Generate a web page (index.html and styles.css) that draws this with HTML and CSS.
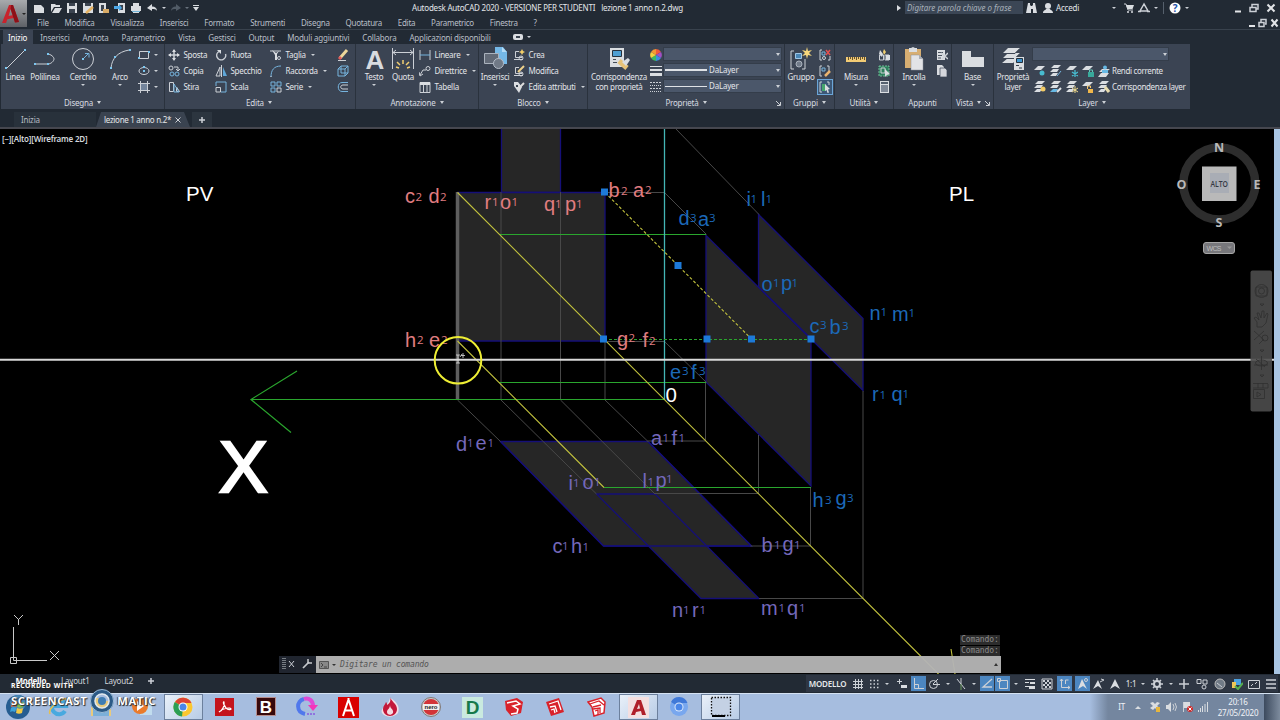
FILE: index.html
```html
<!DOCTYPE html>
<html lang="it">
<head>
    <meta charset="UTF-8">
    <title>Autodesk AutoCAD 2020 - lezione 1 anno n.2.dwg</title>
    <link rel="stylesheet" href="styles.css">
</head>
<body>
    <header>
        <div class="logo">
            <svg width="18" height="20" viewBox="0 0 18 20"><path fill="#c8232c" d="M0 19L7 1h4l6 17-4 .5-1.4-4.5-6.2 1.2L4 19zM6.6 12l4-.8L8.6 5z"/><path fill="#8d1118" d="M9 1h2l6 17-4 .5L8.6 5z"/></svg>
            <i class="caret"></i>
        </div>
        <div class="head-rows">
            <div class="titlebar">
                <div class="quick">
                    <svg width="12" height="12"><path class="w" d="M1 3h7l3 3v5H1z"/></svg>
                    <svg width="12" height="12"><path class="w" d="M1 10V2h4l1 1h4v2H4zM2 11l3-5h7l-3 5z"/></svg>
                    <svg width="12" height="12"><path class="w" d="M1 1h10v10H1z"/><path class="k" d="M3 1h6v3H3zM3 7h6v4H3z"/></svg>
                    <svg width="12" height="12"><path class="w" d="M1 1h10v10H1z"/><path class="k" d="M3 1h6v3H3z"/><path d="M4 11L11 5" stroke="#e5b262" stroke-width="2.5"/></svg>
                    <svg width="12" height="12"><path class="w" d="M1 1h7v10H1z"/><path class="k" d="M3 3h3v6H3z"/><path fill="#d9ab66" d="M5 7h6v4H5z"/></svg>
                    <svg width="12" height="12"><path class="w" d="M4 1h7v10H4z"/><path class="k" d="M6 3h3v5H6z"/><path fill="#4da8e8" d="M0 4h5V2l3 4-3 3V7H0z"/></svg>
                    <svg width="12" height="12"><path class="w" d="M3 1h6v3H3zM1 4h10v5H1zM3 8h6v3H3z"/><path stroke="#72b4d8" d="M2 9.5h8"/></svg>
                    <svg width="12" height="12"><path class="w" d="M1 6l5-4v2.500c3 0 5 1.500 5 4.500-1-2-3-2-5-2V9z"/></svg>
                    <i class="caret"></i>
                    <svg width="12" height="12"><path fill="#515b66" d="M11 6L6 2v2.500C3 4.500 1 6 1 9c1-2 3-2 5-2v2z"/></svg>
                    <i class="caret dim"></i>
                    <svg width="8" height="8"><path class="w" d="M1 1h6v1H1zM1 3h6L4 7z"/></svg>
                </div>
                <div class="doc-title"><span>Autodesk AutoCAD 2020 - VERSIONE PER STUDENTI</span><span>lezione 1 anno n.2.dwg</span></div>
                <svg class="play" width="4" height="6"><path class="w" d="M0 0l4 3-4 3z"/></svg>
                <div class="search">Digitare parola chiave o frase</div>
                <div class="account">
                    <svg width="12" height="12"><path class="w" d="M2 1h2v2l1 1h1l1-1V1h2l2 10H7V7H5v4H0z"/></svg>
                    <svg width="12" height="12"><circle class="w" cx="6" cy="4" r="3"/><path class="w" d="M1 11c0-3 3-3 3-4h4c0 1 3 1 3 4z"/></svg>
                    <span>Accedi</span>
                    <i class="caret"></i>
                    <svg width="12" height="12"><path class="l" d="M1 2h2l2 6h5"/><path class="w" d="M3 3h8L9.500 7H4.500z"/><circle class="w" cx="5" cy="10" r="1"/><circle class="w" cx="9" cy="10" r="1"/></svg>
                    <svg width="12" height="12"><path class="l" stroke-width="1.500" d="M6 2L2 9h8zM0 9.500h3M9 9.500h3"/></svg>
                    <i class="caret"></i>
                    <i class="sep"></i>
                    <svg width="12" height="12"><circle cx="6" cy="6" r="5.500" fill="#fff"/><text class="help" x="6" y="9.500">?</text></svg>
                    <i class="caret"></i>
                </div>
                <div class="win">
                    <svg width="7" height="10"><path class="l2" d="M0 8.500h6"/></svg>
                    <svg width="10" height="10"><path class="l" stroke-width="1.500" d="M3 4V1.500h6V6H7M1 4.500h6v4H1z"/></svg>
                    <svg width="10" height="10"><path class="l2" d="M1.500 1.500l7 7M8.500 1.500l-7 7"/></svg>
                </div>
            </div>
            <nav class="menubar">
                <span>File</span><span>Modifica</span><span>Visualizza</span><span>Inserisci</span><span>Formato</span><span>Strumenti</span><span>Disegna</span><span>Quotatura</span><span>Edita</span><span>Parametrico</span><span>Finestra</span><span>?</span>
                <div class="win small">
                    <svg width="6" height="10"><path class="l2" d="M0 8h6"/></svg>
                    <svg width="9" height="10"><path class="l" stroke-width="1.500" d="M3 4V1.500h5V6H7M1 4.500h5v4H1z"/></svg>
                    <svg width="9" height="10"><path class="l2" d="M1.500 1.500l6 7M7.500 1.500l-6 7"/></svg>
                </div>
            </nav>
        </div>
    </header>

    <nav class="tabs">
        <span class="active">Inizio</span><span>Inserisci</span><span>Annota</span><span>Parametrico</span><span>Vista</span><span>Gestisci</span><span>Output</span><span>Moduli aggiuntivi</span><span>Collabora</span><span>Applicazioni disponibili</span>
        <svg width="10" height="7"><rect class="w" width="10" height="6" rx="2"/><path class="k" d="M3 2h4v2H3z"/></svg>
        <i class="caret"></i>
    </nav>

    <section class="ribbon">
        <div class="panel draw">
            <div class="tools">
                <div class="big"><svg width="24" height="24"><path class="l" d="M4 21L22 3"/><path class="dot" d="M2 20h2v2H2zM21 2h2v2h-2z"/></svg><b>Linea</b></div>
                <div class="big"><svg width="24" height="24"><path class="l" d="M2 17h13c3 0 6-3 6-5s-3-5-7-5"/><path class="dot" d="M1 16h2v2H1zM14 16h2v2h-2zM14 6h2v2h-2z"/></svg><b>Polilinea</b></div>
                <div class="big"><svg width="24" height="24"><circle class="l" cx="12" cy="12" r="10.500"/><path class="b" d="M12 12l5-5M14 6.500h4v4"/><path class="dot" d="M11 11h2v2h-2z"/></svg><b>Cerchio</b><i class="caret"></i></div>
                <div class="big"><svg width="24" height="24"><path class="l" d="M3 21C4 11 10 5 21 3"/><path class="dot" d="M2 20h2v2H2zM6 9h2v2H6zM21 2h2v2h-2z"/></svg><b>Arco</b><i class="caret"></i></div>
                <div class="col">
                    <div class="tool"><svg width="12" height="12"><path class="l" d="M1.500 2.500h9v7h-9z"/><path class="dot" d="M0 8h2v2H0zM10 2h2v2h-2z"/></svg><i class="caret"></i></div>
                    <div class="tool"><svg width="12" height="12"><ellipse class="l" cx="6" cy="6" rx="5" ry="3.500"/><path class="dot" d="M5 5h2v2H5zM5 1h2v2H5z"/></svg><i class="caret"></i></div>
                    <div class="tool"><svg width="12" height="12"><path class="l" d="M2.500 0v12M9.500 0v12M0 2.500h12M0 9.500h12"/><path fill="#73849b" d="M3 3h6v6H3z"/></svg><i class="caret"></i></div>
                </div>
            </div>
            <h2>Disegna <i class="caret"></i></h2>
        </div>

        <div class="panel edit">
            <div class="tools">
                <div class="col">
                    <div class="tool"><svg width="12" height="12"><path class="l" stroke-width="1.500" d="M6 1v10M1 6h10"/><path class="w" d="M6 0l2 3H4zM6 12l2-3H4zM0 6l3-2v4zM12 6L9 4v4z"/></svg>Sposta</div>
                    <div class="tool"><svg width="12" height="12"><circle class="l" cx="3" cy="3" r="2"/><circle class="b" cx="4" cy="9" r="2"/><circle class="b" cx="9" cy="9" r="2"/><path class="l" d="M6 2h4v3M8 4l2 2 2-2"/></svg>Copia</div>
                    <div class="tool"><svg width="12" height="12"><path class="l" d="M1.500 1.500h4v9h-4zM8.500 6v4.500h3z"/><path class="b" d="M6 3l5 8H6z"/></svg>Stira</div>
                </div>
                <div class="col">
                    <div class="tool"><svg width="12" height="12"><path class="l" stroke-width="1.400" d="M4 2.500A4.500 4.500 0 1 0 10.500 5"/><path class="w" d="M2 1h4v4z"/></svg>Ruota</div>
                    <div class="tool"><svg width="12" height="12"><path class="l" d="M5 2v9H1zM6.500 0v12"/><path fill="#5fa7d8" d="M8 2l4 9H8z"/></svg>Specchio</div>
                    <div class="tool"><svg width="12" height="12"><path class="b" d="M1 5V1h10v10H6"/><path class="l" d="M1 6.500h4.500V11H1z"/></svg>Scala</div>
                </div>
                <div class="col">
                    <div class="tool"><svg width="12" height="12"><path class="l" d="M0 2h11"/><path class="w" d="M2 1l4 3 3-2-2 3v6H5V6z"/><circle class="l" cx="9" cy="9" r="1.500"/></svg>Taglia <i class="caret"></i></div>
                    <div class="tool"><svg width="12" height="12"><path class="b" d="M1 12C1 5 4 1 11 1"/><path class="l" d="M1 11v1"/></svg>Raccorda <i class="caret"></i></div>
                    <div class="tool"><svg width="12" height="12"><path class="b" d="M1 1h4v4H1zM7 1h4v4H7zM1 7h4v4H1z"/><path class="l" d="M7 7h4v4H7z"/></svg>Serie <i class="caret"></i></div>
                </div>
                <div class="col">
                    <div class="tool"><svg width="12" height="12"><path d="M3 9l7-8" stroke="#ecd79a" stroke-width="3"/><path d="M2 10l2-2" stroke="#e45b5b" stroke-width="3"/><path class="l" d="M1 11.500h8"/></svg></div>
                    <div class="tool"><svg width="12" height="12"><path class="b" d="M1 4h7v7H1zM1 4l3-3h7l-3 3M11 1v7l-3 3M4 1v7h7"/></svg></div>
                    <div class="tool"><svg width="12" height="12"><path class="b" d="M11 1.500H5c-5 0-5 9 0 9h6"/><path class="l" d="M11 4H6C3 4 3 8 6 8h5"/></svg></div>
                </div>
            </div>
            <h2>Edita <i class="caret"></i></h2>
        </div>

        <div class="panel note">
            <div class="tools">
                <div class="big"><svg width="24" height="24"><text class="big-a" x="13" y="21.500">A</text></svg><b>Testo</b><i class="caret"></i></div>
                <div class="big"><svg width="24" height="24"><path class="l" d="M1.500 1v21M22.500 1v21M2 5.500h20M5 3L2 5.500 5 8M19 3l3 2.500L19 8"/><path d="M8 21l-3-1M9 18l-3-3M12 17v-4M15 18l3-3M16 21l3-1" stroke="#f0cd72" stroke-width="1.500"/></svg><b>Quota</b></div>
                <div class="col">
                    <div class="tool"><svg width="12" height="12"><path class="l" d="M1 1v10M11 1v10"/><path class="b" d="M1 6h10"/></svg>Lineare <i class="caret"></i></div>
                    <div class="tool"><svg width="12" height="12"><circle class="l" cx="9" cy="3.500" r="2"/><path class="l" d="M1 10l3-5h3M0 7l1 4 3-2"/></svg>Direttrice <i class="caret"></i></div>
                    <div class="tool"><svg width="12" height="12"><path class="l" d="M1 1.500h10v10H1zM4.500 4v8M8 4v8"/><path class="w" d="M1 1h10v3H1z"/></svg>Tabella</div>
                </div>
            </div>
            <h2>Annotazione <i class="caret"></i></h2>
        </div>

        <div class="panel block">
            <div class="tools">
                <div class="big"><svg width="24" height="24"><path fill="#75b9e8" d="M12 0h8l4 5v12H12z"/><path fill="#b4dcf7" d="M19 0v5h5z"/><path fill="#626a77" stroke="#aab2bd" d="M1.500 6.500h14v10h-14z"/><circle cx="15.500" cy="16.500" r="5" fill="#707986" stroke="#b5bdc8"/></svg><b>Inserisci</b><i class="caret"></i></div>
                <div class="col">
                    <div class="tool"><svg width="12" height="12"><path class="l" d="M6 2.500H2.500v6H9V7M1 10.500h9"/><circle class="l" cx="8" cy="9" r="2"/><path fill="#f3cf69" d="M9 0l1 2 2 1-2 1-1 2-1-2-2-1 2-1z"/></svg>Crea</div>
                    <div class="tool"><svg width="12" height="12"><path class="l" d="M6 2.500H2.500v6H9V7M1 10.500h9"/><circle class="l" cx="8" cy="9" r="2"/><path d="M5 7l6-6" stroke="#efd28b" stroke-width="2"/></svg>Modifica</div>
                    <div class="tool"><svg width="12" height="12"><path class="w" d="M1 1h4l4 5-3 6-5-7z"/><path d="M5 8l6-6" stroke="#ddd" stroke-width="2"/><path class="k" d="M3 4h2v2H3z"/></svg>Edita attributi <i class="caret"></i></div>
                </div>
            </div>
            <h2>Blocco <i class="caret"></i></h2>
        </div>

        <div class="panel props">
            <div class="tools">
                <div class="big"><svg width="24" height="24"><path class="w" d="M3 1h14v19H3z"/><path fill="#4e9fd3" stroke="#26313d" d="M5.500 3.500h9v6h-9z"/><path stroke="#444d59" d="M6 12.500h3M6 15.500h4"/><path d="M12 14l8 7" stroke="#e7c277" stroke-width="5"/><path class="w" d="M15 15l6-4 2 2-4 6z"/></svg><b>Corrispondenza<br>con proprietà</b></div>
                <div class="col">
                    <div class="tool"><svg width="12" height="12"><path fill="#ef5a3c" d="M6 6V0a6 6 0 0 1 5 3z"/><path fill="#a24fc5" d="M6 6l5-3a6 6 0 0 1 0 6z"/><path fill="#3a90e0" d="M6 6l5 3a6 6 0 0 1-5 3z"/><path fill="#3cba62" d="M6 6v6a6 6 0 0 1-5-3z"/><path fill="#f2d13f" d="M6 6L1 9a6 6 0 0 1 0-6z"/><path fill="#f39a34" d="M6 6L1 3a6 6 0 0 1 5-3z"/></svg></div>
                    <div class="tool"><svg width="12" height="12"><path class="w" d="M0 1h12v1H0zM0 4h12v2H0zM0 8h12v3H0z"/></svg></div>
                    <div class="tool"><svg width="12" height="12"><path class="l" stroke-dasharray="2 1" d="M0 1.500h12M0 7.500h12"/><path class="l" stroke-dasharray="1 1" d="M0 4.500h12M0 10.500h12"/></svg></div>
                </div>
                <div class="combos">
                    <div class="combo"><i class="caret"></i></div>
                    <div class="combo"><hr class="thick">DaLayer<i class="caret"></i></div>
                    <div class="combo"><hr>DaLayer<i class="caret"></i></div>
                </div>
            </div>
            <h2>Proprietà <i class="caret"></i></h2>
            <svg class="launch" width="5" height="5"><path class="l" d="M0 0l4 4M4.500 1v3.500H1"/></svg>
        </div>

        <div class="panel groups">
            <div class="tools">
                <div class="big"><svg width="24" height="24"><path class="l" d="M5 4H2v18h3M13 22h3V12"/><path fill="#4a86b5" stroke="#9fc7e6" d="M6.500 6.500h6v5h-6z"/><circle cx="10" cy="17" r="3" fill="#717b89" stroke="#aab2bd"/><path fill="#f6d77c" d="M18 0l1 4 4-1-3 3 3 3-4-1-1 4-1-4-4 1 3-3-3-3 4 1z"/></svg><b>Gruppo</b></div>
                <div class="col">
                    <div class="tool"><svg width="12" height="12"><path class="l" d="M3 1H1v10h2M9 11h2V7"/><path class="b" d="M3 3h3v3H3z"/><circle class="l" cx="5" cy="9" r="1.500"/><path d="M7 1l4 5M11 1L7 6" stroke="#e25050" stroke-width="1.500"/></svg></div>
                    <div class="tool"><svg width="12" height="12"><path class="l" d="M3 1H1v10h2M8 1h2v5"/><path class="b" d="M3 3h3v3H3z"/><path d="M6 11l5-5" stroke="#e9b36e" stroke-width="2.500"/></svg></div>
                    <div class="tool on"><svg width="12" height="12"><path class="l" d="M3 1H1v10h2M8 1h2v3"/><path fill="#46a56d" d="M3 3h4v7H3z"/><path class="w" d="M6 3l5 5-2 .500 1 3-1.500.500-1-3L6 10z"/></svg></div>
                </div>
            </div>
            <h2>Gruppi <i class="caret"></i></h2>
        </div>

        <div class="panel utils">
            <div class="tools">
                <div class="big"><svg width="24" height="24"><path fill="#f2cb74" d="M2 10h20v5H2z"/><path stroke="#695330" d="M4.500 10v3M6.500 10v2M8.500 10v3M10.500 10v2M12.500 10v3M14.500 10v2M16.500 10v3M18.500 10v2M20.500 10v3"/></svg><b>Misura</b><i class="caret"></i></div>
                <div class="col">
                    <div class="tool"><svg width="12" height="12"><path class="l" d="M1.500 6v5h4V6zM7 6h4v5H7z"/><path class="w" d="M2 1l3 4-1 3-3-3zM8 6h4v5H8z"/><path fill="#f1d070" d="M6 0l2 3-2 3-1-3z"/></svg></div>
                    <div class="tool"><svg width="12" height="12"><path fill="#2e805d" stroke="#70bd98" stroke-dasharray="2 1" d="M1 1h10v10H1z"/><path class="l" d="M3 3h4v5H3z"/><path class="w" d="M7 4l5 5-3 1-2 2z"/></svg></div>
                    <div class="tool"><svg width="12" height="12"><path class="w" d="M2 0h9v12H2z"/><path fill="#808997" d="M3 4h7v7H3z"/><path fill="#56616f" d="M3 1h7v2H3z"/></svg></div>
                </div>
            </div>
            <h2>Utilità <i class="caret"></i></h2>
        </div>

        <div class="panel clip">
            <div class="tools">
                <div class="big"><svg width="24" height="24"><path fill="#d7ae72" d="M3 2h16v19H3z"/><path class="w" d="M7 1h2l2-1 2 1h2v4H7z"/><path fill="#e2e3e6" stroke="#8a8f98" stroke-width=".5" d="M9 8h8l4 4v11H9z"/><path fill="#a9adb5" d="M17 8v4h4z"/></svg><b>Incolla</b><i class="caret"></i></div>
                <div class="col">
                    <div class="tool"><svg width="12" height="12"><path class="w" d="M1 1h8v10H1z"/><path stroke="#4a5360" d="M2 3.500h5M2 6.500h4M2 9h3"/><path class="l" stroke-width="1.500" d="M5 4l7 6M12 4L6 10"/></svg></div>
                    <div class="tool"><svg width="12" height="12"><path class="w" d="M1 0h5l2 2v8H1z"/><path fill="#d5d7dc" stroke="#3b4453" stroke-width=".7" d="M4 3h5l2 2v7H4z"/></svg></div>
                </div>
            </div>
            <h2>Appunti</h2>
        </div>

        <div class="panel view">
            <div class="tools">
                <div class="big"><svg width="24" height="24"><path class="w" d="M1 4h9v6h13v10H1z"/></svg><b>Base</b><i class="caret"></i></div>
            </div>
            <h2>Vista <i class="caret"></i></h2>
            <svg class="launch" width="5" height="5"><path class="l" d="M0 0l4 4M4.500 1v3.500H1"/></svg>
        </div>

        <div class="panel layer">
            <div class="tools">
                <div class="big"><svg width="24" height="24"><path class="w" d="M7 1h12l-5 5H2zM7 6h12l-5 5H2zM7 11h10l-5 5H1z"/><path stroke="#3b4453" d="M2 6.500h12l5-5M2 11.500h12l5-5"/><path class="w" d="M13 10h10v13H13z"/><path fill="#3e95cf" stroke="#26313d" d="M15.500 11.500h6v4h-6z"/><path stroke="#333c48" d="M15 18.500h3M18 21h3"/></svg><b>Proprietà<br>layer</b></div>
                <div class="layer-right">
                    <div class="combo"><i class="caret"></i></div>
                    <div class="strip">
                        <svg width="12" height="12"><path class="w" d="M4 1h7L7 5H0z"/><circle cx="8" cy="8" r="2.500" fill="#48bcd0"/></svg>
                        <svg width="12" height="12"><path class="w" d="M4 0h7L8 3H1zM3 4h6L7 7H0zM3 8h5l-2 3H0z"/><path class="b" d="M7 11l4-5"/></svg>
                        <svg width="12" height="12"><path class="w" d="M4 1h7L7 5H0z"/><path stroke="#48bcd0" stroke-width="1.300" d="M9 5v7M6 7l6 4M12 7l-6 4"/></svg>
                        <svg width="12" height="12"><path class="w" d="M4 1h7L7 5H0z"/><path fill="#39a99b" d="M6 7h6v5H6z"/><path stroke="#62c7ba" d="M7.500 7V5h3v2"/></svg>
                        <svg width="12" height="12"><path class="w" d="M4 4h8L8 7H1zM3 8h8l-3 4H0z"/><circle cx="7" cy="2.500" r="2" fill="#67b8e4"/><path fill="#67b8e4" d="M4 5h6v3H4z"/></svg>
                        <span>Rendi corrente</span>
                    </div>
                    <div class="strip">
                        <svg width="12" height="12"><path class="w" d="M4 0h7L8 3H1zM3 4h6L7 7H0zM3 8h5l-2 3H0z"/><circle cx="9" cy="8" r="2.500" fill="#f2cb67"/></svg>
                        <svg width="12" height="12"><path class="w" d="M4 0h7L8 3H1zM3 4h6L7 7H0z"/><path fill="#67b8e4" d="M3 8h5l-2 3H0z"/><path class="l2" d="M7 11l4-4"/></svg>
                        <svg width="12" height="12"><path class="w" d="M4 0h7L8 3H1zM3 4h6L7 7H0zM3 8h5l-2 3H0z"/><path stroke="#f2dc8e" d="M9 5v7M6 7l6 4M12 7l-6 4"/></svg>
                        <svg width="12" height="12"><path class="w" d="M4 1h7L7 5H0z"/><path fill="#f0b64a" d="M6 8h5v4H6z"/><path stroke="#f0c571" d="M5.500 8V5h3v2"/></svg>
                        <svg width="12" height="12"><path class="w" d="M4 0h7L8 3H1zM3 4h6L7 7H0zM3 8h5l-2 3H0z"/><path d="M7 6l4 5" stroke="#e8dcae" stroke-width="3"/></svg>
                        <span>Corrispondenza layer</span>
                    </div>
                </div>
            </div>
            <h2>Layer <i class="caret"></i></h2>
        </div>
    </section>

    <div class="doc-tabs">
        <span class="start">Inizia</span>
        <span class="current">lezione 1 anno n.2* <svg width="6" height="6"><path class="l" d="M.5.500l5 5M5.500.500l-5 5"/></svg></span>
        <span class="plus"><svg width="6" height="6"><path class="l" stroke-width="1.500" d="M3 0v6M0 3h6"/></svg></span>
    </div>

    <main>
        <svg class="drawing" width="1274" height="545" viewBox="0 129 1274 545">
            <!-- facce piene -->
            <g class="face">
                <path d="M501.500 120v72.500h59V120z"/>
                <path d="M457.500 192.500h147.500v148.500h-147.500z"/>
                <path d="M758.500 214.500L863 318.500v72L758.500 287z"/>
                <path d="M706 235.500L811 339v147L706 382z"/>
                <path d="M500.500 441.500h147.500L751.500 546H603.500z"/>
                <path d="M596.500 494h58.500l104 104.500h-58z"/>
            </g>
            <path class="edge" d="M758.500 287L811 339M603.500 546h148M500.500 441.500L603.500 546M648 441.500L751.500 546"/>

            <!-- linee di richiamo -->
            <g class="aux">
                <path d="M605 192.500h59.500l42 42M605 341.500h59.500l42 41M676 129l83 85.500"/>
                <path d="M705.500 382v59h-58M758.500 435v58.500H655M810.500 487v59h-60M863 391v207.500H759"/>
                <path d="M501 192v208l95.500 94M560.500 192v208L655 494M605 341v59l43 41.500M457.500 400l43 41.500"/>
            </g>
            <path class="side" d="M457.500 192v208"/>

            <path class="green" d="M500 234.500h206M499 382.500h207M251 399.500h413M604 487.500h207M297 371l-46 28.500 40 33"/>
            <path class="cyan" d="M664.500 129v271"/>
            <path class="yellow" d="M457.500 192.500L938.500 674M457.500 341L604 487.500M951 649l4 25"/>
            <path class="yellow dash" d="M605 192.500L751.500 339"/>
            <path class="green dash" d="M604 339.500h207"/>
            <path class="cross" d="M0 359.800h1274"/>
            <path class="grip" d="M601 188.500h7v7h-7zM600 335.500h7v7h-7zM674.500 262h7v7h-7zM703.500 335.500h7v7h-7zM748 335.500h7v7h-7zM807.500 335.500h7v7h-7z"/>

            <g class="pts red">
                <text x="405" y="203">c<tspan x="415.500" y="200.500">2</tspan></text>
                <text x="428.500" y="203">d<tspan x="440" y="200.500">2</tspan></text>
                <text x="484.500" y="208.500">r<tspan x="492" y="205.500">1</tspan></text>
                <text x="500" y="208.500">o<tspan x="511.500" y="206">1</tspan></text>
                <text x="544" y="211">q<tspan x="555" y="208">1</tspan></text>
                <text x="565" y="211">p<tspan x="576" y="208">1</tspan></text>
                <text x="608.500" y="197">b<tspan x="621" y="195">2</tspan></text>
                <text x="633" y="197">a<tspan x="645" y="194">2</tspan></text>
                <text x="405" y="346.500">h<tspan x="417" y="344">2</tspan></text>
                <text x="429" y="346.500">e<tspan x="441" y="344">2</tspan></text>
                <text x="617" y="346">g<tspan x="628.500" y="342">2</tspan></text>
                <text x="642.500" y="347">f<tspan x="649" y="345">2</tspan></text>
            </g>
            <g class="pts blue">
                <text x="678.500" y="225">d<tspan x="690" y="222">3</tspan></text>
                <text x="698" y="225.500">a<tspan x="709" y="222">3</tspan></text>
                <text x="746.500" y="206">i<tspan x="750.500" y="203">1</tspan></text>
                <text x="761" y="206">l<tspan x="765.500" y="203">1</tspan></text>
                <text x="761.500" y="290.500">o<tspan x="773" y="287">1</tspan></text>
                <text x="781" y="290">p<tspan x="791.500" y="287">1</tspan></text>
                <text x="869.500" y="320">n<tspan x="880.500" y="316">1</tspan></text>
                <text x="892" y="320.500">m<tspan x="908.500" y="317">1</tspan></text>
                <text x="809.500" y="333">c<tspan x="820" y="329">3</tspan></text>
                <text x="829.500" y="333.500">b<tspan x="842" y="330">3</tspan></text>
                <text x="670" y="378.500">e<tspan x="682" y="375">3</tspan></text>
                <text x="691" y="378.500">f<tspan x="699" y="375">3</tspan></text>
                <text x="872" y="401">r<tspan x="879.500" y="399">1</tspan></text>
                <text x="891.500" y="401">q<tspan x="902.500" y="398">1</tspan></text>
                <text x="812.500" y="507">h<tspan x="825" y="504">3</tspan></text>
                <text x="835.500" y="505">g<tspan x="847" y="502">3</tspan></text>
            </g>
            <g class="pts violet">
                <text x="456" y="450.500">d<tspan x="467" y="447">1</tspan></text>
                <text x="475.500" y="449.500">e<tspan x="487.500" y="447">1</tspan></text>
                <text x="651" y="445">a<tspan x="662.500" y="442">1</tspan></text>
                <text x="671.500" y="445">f<tspan x="678.500" y="442">1</tspan></text>
                <text x="568.500" y="490">i<tspan x="573" y="487">1</tspan></text>
                <text x="582.500" y="489">o<tspan x="594" y="486">1</tspan></text>
                <text x="642.500" y="488">l<tspan x="647.500" y="486">1</tspan></text>
                <text x="655.500" y="486.500">p<tspan x="666" y="483">1</tspan></text>
                <text x="552.500" y="553">c<tspan x="562" y="550">1</tspan></text>
                <text x="571" y="553">h<tspan x="582.500" y="551">1</tspan></text>
                <text x="761.500" y="552">b<tspan x="774" y="549">1</tspan></text>
                <text x="782.500" y="551">g<tspan x="794" y="549">1</tspan></text>
                <text x="672" y="617">n<tspan x="683" y="614">1</tspan></text>
                <text x="692" y="617">r<tspan x="699.500" y="614">1</tspan></text>
                <text x="761" y="615">m<tspan x="778.500" y="612">1</tspan></text>
                <text x="787" y="615">q<tspan x="799" y="612">1</tspan></text>
            </g>
            <g class="names">
                <text x="665.500" y="402">0</text>
                <text x="186" y="201">PV</text>
                <text x="949" y="201">PL</text>
                <text class="axis" x="219" y="492">X</text>
            </g>

            <!-- puntatore -->
            <path d="M456 355h4M456 363h4M458 355v8M460 357l2-3M461 355.500h4M463 353v5" stroke="#ddd" stroke-width=".8"/>
            <circle class="pointer" cx="458" cy="360.300" r="23.300"/>

            <g class="ucs">
                <path d="M13.500 627v33.500H47M10.500 657.500h6v6h-6zM14 615l4.500 4.500L23 615M18.500 619v6M50 651l9 9M59 651l-9 9"/>
            </g>

            <!-- viewcube -->
            <circle cx="1219.300" cy="183.500" r="36" fill="none" stroke="#2d2d2d" stroke-width="8.500"/>
            <path fill="#b9b9b9" d="M1202 166.500h34.500v34.500H1202z"/>
            <path fill="#a9adb5" d="M1210 173h19v20h-19z"/>
            <text class="cube" x="1210.500" y="187" textLength="17.500" lengthAdjust="spacingAndGlyphs">ALTO</text>
            <g class="compass">
                <text x="1219" y="151.500">N</text><text x="1219" y="227">S</text><text x="1181.500" y="189">O</text><text x="1257" y="189">E</text>
            </g>
            <rect x="1203.500" y="242.500" width="31" height="11" rx="2.500" fill="#77777b" stroke="#a6a6a6"/>
            <text class="wcs" x="1206.500" y="250.500" textLength="15">WCS</text>
            <path d="M1227 246.500h5l-2.500 2.500z" fill="#999"/>

            <g class="navbar">
                <rect x="1250.500" y="270.500" width="21.500" height="141" rx="2" fill="#4d4d4d" fill-opacity=".9" stroke="none"/>
                <circle cx="1261.500" cy="291" r="6.500"/><circle cx="1261.500" cy="291" r="3"/><path d="M1256 287v9h11v-9z"/>
                <path d="M1257 322l-3-4 2-1 3 3-2-7h2l2 5 1-7h2l0 7 3-5 1 1-2 9-4 4h-5zM1254 331l10 9M1264 331l-10 9"/>
                <circle cx="1265" cy="338" r="3"/><path d="M1263 340l-4 4M1254 365h14M1256 359l9 8M1261.500 356v14"/><ellipse cx="1261.500" cy="363" rx="6" ry="3"/>
                <path d="M1253 383.500h15M1253 388h15v-4M1258 383v5M1263 383v5M1253.500 389.500h11v9h-11zM1257 392l4 2.500-4 2.500zM1260 304h4l-2 2zM1260 350h4l-2 2zM1260 375h4l-2 2z"/>
            </g>
        </svg>
        <div class="vp-label">[−][Alto][Wireframe 2D]</div>
        <div class="history"><span>Comando:</span><span>Comando:</span></div>
        <div class="command">
            <div class="handle">
                <svg width="36" height="16"><path stroke="#777d84" stroke-width="4" stroke-dasharray="1 1" d="M5 2v12"/><path class="l" d="M10 5l5 6M15 5l-5 6"/><path d="M24 12l6-6" stroke="#c5c8cc" stroke-width="1.700"/><path stroke="#c5c8cc" stroke-width="1.500" d="M29 3v4h4"/></svg>
            </div>
            <div class="prompt">
                <svg width="10" height="8"><path fill="#888" stroke="#555" d="M.5.500h9v7h-9z"/><path stroke="#444" d="M2 2l2 2-2 2M5 6h3"/></svg>
                <i class="caret dark"></i>
                <span>Digitare un comando</span>
                <i class="up"></i>
            </div>
        </div>
    </main>

    <div class="statusbar">
        <div class="layouts"><b>Modello</b><span>Layout1</span><span>Layout2</span><svg width="6" height="6"><path class="l" stroke-width="1.500" d="M3 0v6M0 3h6"/></svg></div>
        <div class="switches">
            <span class="model">MODELLO</span>
            <svg width="12" height="12"><path class="l" d="M3.500 1v10M6.500 1v10M9.500 1v10M1 3.500h10M1 6.500h10M1 9.500h10"/></svg>
            <svg width="12" height="12"><path class="l" stroke-width="1.500" stroke-dasharray="1.500 2" d="M2 2.500h9M2 6h9M2 9.500h9"/></svg>
            <i class="caret"></i>
            <svg width="12" height="12"><path class="l" d="M3.500 1v5M1 3.500h5"/><path class="w" d="M5 7h6v3H5z"/></svg>
            <svg class="hot" width="15" height="15"><path class="l" d="M3.500 2v10.500H13M4 8.500h3.500V12"/></svg>
            <svg width="12" height="12"><circle class="l" cx="5.500" cy="6.500" r="4"/><path class="l" d="M5 6.500h7M5 6l5-5"/></svg>
            <i class="caret"></i>
            <svg width="12" height="12"><path class="l" d="M2 1l8 10M6 6V0"/><path stroke="#66955d" d="M6 6v6"/></svg>
            <i class="caret"></i>
            <svg class="hot" width="14" height="15"><path class="l" stroke-width="1.300" d="M12 3l-9 8h9"/></svg>
            <svg class="hot" width="15" height="15"><path class="l" d="M4.500 4.500h8v8h-8zM2.500 2.500h3v3h-3z"/></svg>
            <i class="caret"></i>
            <svg width="12" height="12"><path class="w" d="M1 1h10v1H1zM1 4h4v1H1zM6 4h5v2H6zM1 8h4v1H1zM5 8h6v3H5z"/></svg>
            <svg width="12" height="12"><path class="l" d="M1 1h10v10H1z"/><path class="l" stroke-width="2" stroke-dasharray="2 2" d="M2 3h8M4 5h7M2 7h8M4 9h7"/></svg>
            <svg class="hot" width="15" height="15"><path class="l" d="M4.500 3v8.500H13M3 5l1.500-2L6 5M11 10l2 1.500-2 1.500M8.500 8V4h3"/></svg>
            <svg class="hot" width="15" height="15"><path class="w" d="M7 3l5 10-4-3-5 3z"/><circle class="l" cx="11" cy="4" r="1.500"/></svg>
            <svg width="12" height="12"><path class="w" d="M6 2l4 9-4-3-5 3z"/><path class="l" d="M8 4l4-2-3-1"/></svg>
            <svg width="12" height="12"><path class="w" d="M6 1l5 10-5-3-5 3z"/></svg>
            <span>1:1</span>
            <i class="caret"></i>
            <svg width="12" height="12"><circle class="l" cx="6" cy="6" r="3" stroke-width="2"/><path class="l" stroke-width="1.500" d="M6 0v3M6 9v3M0 6h3M9 6h3M2 2l2 2M8 8l2 2M10 2L8 4M4 8l-2 2"/></svg>
            <i class="caret"></i>
            <svg width="12" height="12"><path class="l" stroke-width="1.500" d="M6 1v10M1 6h10"/></svg>
            <svg width="12" height="12"><path class="l" d="M1 1.500h4v4H1zM7 6h4v-4H7z"/><circle class="l" cx="8" cy="9" r="2"/></svg>
            <svg width="12" height="12"><circle cx="6" cy="6" r="5" fill="#717b86" stroke="#bbb"/><path class="l" d="M3 5l5 4"/></svg>
            <svg width="12" height="12"><path fill="#4aa0e0" d="M3 1h7v6H3z"/><path fill="#f0c557" d="M1 4h4v6H1z"/><path stroke="#55ad4d" stroke-width="2" d="M4 8l3 3 5-6"/></svg>
            <svg width="12" height="12"><path class="l" d="M.5 2.500h11v8H.5zM3 8l2-2M7 6l2-2"/></svg>
            <svg width="12" height="12"><path class="l" stroke-width="1.300" d="M1 2h10M1 6h10M1 10h10"/></svg>
        </div>
    </div>

    <footer>
        <div class="apps">
            <div><svg width="26" height="26"><circle cx="13" cy="13" r="12" fill="#265d91"/><circle cx="13" cy="9" r="8" fill="#4b8bb9"/><path fill="#e86b35" d="M7 8c2-2 4-1 5 0l-1 5c-2-1-3-1-5 0z"/><path fill="#83bf48" d="M13 8c2 1 4 1 6 0l-1 5c-2 1-4 1-6 0z"/><path fill="#3aa2dc" d="M6 14c2-1 3-1 5 0l-1 4c-2-1-3-1-5 0z"/><path fill="#f3ca43" d="M12 14c2 1 4 1 6 0l-1 5c-2 1-4 1-6 0z"/></svg></div>
            <div><svg width="22" height="22"><path d="M17 15a7 7 0 1 1 1-5H5" stroke="#48a9df" stroke-width="4"/><path d="M2 18C-1 12 17-1 20 4" stroke="#e6c04e" stroke-width="1.500"/></svg></div>
            <div><svg width="24" height="22"><path fill="#e8ca7d" d="M2 2h9l2 3h9v15H2z"/><path fill="#7bafd9" d="M4 13h16v7H4z"/></svg></div>
            <div><svg width="24" height="22"><path fill="#c1dcee" d="M10 2h12v17H10z"/><circle cx="10" cy="10" r="8" fill="#ea7b2c"/><path fill="#fff" d="M7 5l7 5-7 5z"/></svg></div>
            <div class="open"><svg width="20" height="20"><circle cx="10" cy="10" r="9.500" fill="#fbc72f"/><path fill="#dc4334" d="M10 10L2 5a9.500 9.500 0 0 1 16.500 1H10z"/><path fill="#2b9e55" d="M10 10l-1 9.500A9.500 9.500 0 0 1 1.800 5z"/><circle cx="10" cy="10" r="4.500" fill="#fff"/><circle cx="10" cy="10" r="3.500" fill="#4a86e8"/></svg></div>
            <div><svg width="20" height="20"><path fill="#c4141c" d="M0 1h19v18H0z"/><path stroke="#fff" stroke-width="1.200" d="M4 15c3-1 6-6 5-10-1-1-1 3 2 6 2 2 5 2 5 1 0-2-8-1-12 3"/></svg></div>
            <div><svg width="20" height="20"><path fill="#37090c" stroke="#b78d8d" d="M.5.500h19v18H.5z"/><text class="tile" x="10" y="15.500">B</text></svg></div>
            <div><svg width="22" height="22"><path d="M9 18C0 16 0 5 8 3" stroke="#5078ec" stroke-width="4"/><path d="M8 3c5-2 9 2 9 7" stroke="#e049d5" stroke-width="4"/><path fill="#f535b8" d="M12 9h10l-5 6z"/><path d="M11 18h8" stroke="#8f73e0" stroke-width="2" stroke-dasharray="2 1"/></svg></div>
            <div><svg width="21" height="21"><path fill="#d90000" d="M0 0h21v21H0z"/><path stroke="#fff" stroke-width="2" d="M5 19l5-15h1l5 15M7 13.500h7M10.500 1v4"/></svg></div>
            <div><svg width="20" height="22"><path fill="#f1dfe6" d="M10 2c8 4 10 10 8 15-5 5-12 5-16 0C0 11 8 11 10 2z"/><path fill="#c3183a" d="M10 1c1 4 7 7 7 12 0 4-3 7-7 7s-7-3-7-7c0-3 2-4 3-7 1 1 1 2 1 3 3-2 4-4 3-8z"/><path fill="#f5dbe1" d="M10 9c0 4 4 4 3 8-2 3-6 2-6-1s3-3 3-7z"/></svg></div>
            <div><svg width="20" height="20"><circle cx="10" cy="10" r="9.500" fill="#ccc" stroke="#817977"/><circle cx="10" cy="10" r="8" fill="#d33438"/><path fill="#f2eeee" d="M2 7h16v6H2z"/><text class="nero" x="10" y="12">nero</text></svg></div>
            <div><svg width="21" height="21"><path fill="#c9eadf" d="M0 0h21v21H0z"/><text class="dletter" x="10.500" y="17">D</text></svg></div>
            <div><svg width="20" height="20"><path fill="#d9222b" d="M1 4l12-3 6 4-2 11-10 3-5-6z"/><path stroke="#fff" stroke-width="1.500" d="M3 6l9-2 4 3-7 2 5 3-1 4-6 1"/></svg></div>
            <div><svg width="20" height="20"><path fill="#d9222b" d="M1 5l13-4 5 14-13 4z"/><path stroke="#fff" stroke-width="1.300" d="M4 7l9-3 3 9M5 10l5-1 2 6M6 13l3-1 1 4"/></svg></div>
            <div><svg width="20" height="20"><path fill="#fff" stroke="#d9222b" stroke-width="1.500" d="M1 5l13-4 4 4-1 11-10 3-2-9z"/><path stroke="#d9222b" stroke-width="1.300" d="M3 7l9-3 5 4M6 10l8-2M6 12l7-1v5M8 14l3-1v5"/></svg></div>
            <div class="open"><svg width="21" height="21"><path fill="#f4dfe0" d="M0 0h21v21H0z"/><path fill="#b01e29" d="M3 18L9 3h4l5 15h-4l-1-4-5 1-1 3zM9 12l3-.500L11 7z"/></svg></div>
            <div><svg width="20" height="20"><circle cx="10" cy="10" r="9" fill="#78a7ee"/><path fill="#4079d8" d="M10 10L2 5a9 9 0 0 1 16.500 1H10z"/><circle cx="10" cy="10" r="4.500" fill="#dbe8fb"/><circle cx="10" cy="10" r="3.500" fill="#4a86e8"/></svg></div>
            <div class="open"><svg width="22" height="22"><path fill="#c4d1e4" stroke="#111" stroke-width="1.300" stroke-dasharray="1.500 1.500" d="M1.500 1.500h19v18h-19z"/><path fill="#000" d="M2 19h13v2H2z"/></svg></div>
        </div>
        <div class="tray">
            <span class="lang">IT</span>
            <svg class="more" width="6" height="12"><path class="w" d="M0 8l3-3 3 3z"/></svg>
            <svg width="12" height="12"><path class="w" d="M1 2l3-1 2 2 2-2 3 1-3 3 3 2-3 2-2-2-2 2-3-2 3-2z"/><path fill="#e7b63d" d="M7 6h4v5H7z"/></svg>
            <svg width="12" height="12"><path class="w" d="M1 4h2l3-3v10L3 8H1z"/><path class="l" d="M8 3q2 3 0 6M10 2q3 4 0 8"/></svg>
            <svg width="12" height="12"><path class="l" d="M2.500 1v10"/><path class="w" d="M3 1h6v6H3z"/><circle cx="9" cy="8" r="3" fill="#d12b2b"/><path stroke="#fff" d="M7.500 6.500l3 3M10.500 6.500l-3 3"/></svg>
            <svg width="12" height="12"><path class="w" d="M1 9h1v2H1zM3 7h1v4H3zM5 5h1v6H5zM7.500 3h1v8h-1zM10 1h1v10h-1z"/></svg>
            <div class="clock">20:16<br>27/05/2020</div>
            <div class="desk"></div>
        </div>
    </footer>

    <div class="watermark">
        <small>RECORDED WITH</small>
        <div><span>SCREENCAST</span><svg width="26" height="26"><circle cx="13" cy="13" r="9.500" stroke="#2b5a86" stroke-width="4.500"/><circle cx="13" cy="13" r="11.500" stroke="#b8d2e8" stroke-width=".8"/><circle cx="13" cy="13" r="7" stroke="#dfe8ee" stroke-width="1.500"/><circle cx="13" cy="13" r="4" fill="#3e7db3"/></svg><span>MATIC</span></div>
    </div>
</body>
</html>
```
FILE: styles.css
```css
* {
    box-sizing: border-box;
}
body {
    margin: 0;
    width: 1280px;
    height: 720px;
    overflow: hidden;
    position: relative;
    background: #222a34;
    color: #d3d7dc;
    font: 8px/10px "Noto Sans", sans-serif;
    letter-spacing: -0.2px;
}
svg {
    fill: none;
    flex: none;
    display: block;
}
.w { fill: #dadde1; }
.k { fill: #3a434f; }
.l { stroke: #ccd0d6; fill: none; }
.l2 { stroke: #e2e4e7; stroke-width: 2; }
.b { stroke: #76b4de; fill: none; }
.dot { fill: #7cc6ef; }
.caret {
    flex: none;
    display: inline-block;
    border: 2px solid transparent;
    border-top: 2.5px solid #ccd0d6;
    border-bottom: 0;
}
.caret.dim { border-top-color: #69727d; }
.caret.dark { border-top-color: #333; }

/* barra del titolo */
header {
    display: flex;
    height: 30px;
    border-bottom: 1px solid #39424d;
}
.logo {
    display: flex;
    align-items: center;
    gap: 2px;
    width: 27px;
    height: 27px;
    padding-left: 2px;
    background: linear-gradient(#a8aaad, #5e6166);
}
.logo .caret { border-top-color: #222; }
.head-rows { flex: 1; }
.titlebar {
    display: flex;
    align-items: center;
    height: 15px;
}
.quick {
    display: grid;
    grid-template-columns: 16px 17px 16px 16px 16px 16px 16px 15px 9px 15px 8px 10px;
    align-items: center;
    justify-items: center;
    width: 382px;
    padding-left: 4px;
}
.doc-title {
    display: flex;
    gap: 6px;
    width: 484px;
    padding-left: 3px;
    color: #e3e6e9;
    letter-spacing: -0.22px;
}
.play { margin: 0 4px 0 4px; }
.search {
    width: 118px;
    height: 13px;
    line-height: 13px;
    padding-left: 2px;
    background: #3b4655;
    color: #a9b1bb;
    font-style: italic;
    letter-spacing: 0;
}
.account {
    display: grid;
    grid-template-columns: 17px 15px 52px 14px 15px 16px 7px 8px 16px 8px;
    align-items: center;
    justify-items: center;
    color: #e3e6e9;
}
.account span { justify-self: start; margin-left: 1px; }
.sep {
    width: 1px;
    height: 12px;
    background: #56606c;
}
.help {
    fill: #2452a8;
    font: bold 10px "Open Sans", sans-serif;
    text-anchor: middle;
}
.win {
    display: flex;
    gap: 7px;
    align-items: center;
    margin-left: auto;
    padding-right: 4px;
}
.win.small {
    gap: 3px;
    padding-right: 1px;
}
.menubar {
    display: flex;
    gap: 15.9px;
    align-items: center;
    height: 15px;
    padding-left: 10px;
    color: #b9bfc7;
    letter-spacing: -0.28px;
}
.tabs {
    display: flex;
    align-items: center;
    height: 14px;
    color: #b9bfc7;
}
.tabs span {
    height: 14px;
    line-height: 15px;
    margin-right: 13px;
}
.tabs .active {
    margin: 0 6px 0 3px;
    padding: 0 6px 0 5px;
    background: #3b4453;
    color: #fff;
}
.tabs .active + span { margin-left: 1px; }
.tabs svg { margin: 0 4px 0 9px; }

/* ribbon */
.ribbon {
    display: flex;
    height: 65px;
    padding-left: 1px;
}
.panel {
    position: relative;
    height: 65px;
    padding-top: 3px;
    background: #3b4453;
    border-right: 1px solid #2a323d;
}
.tools {
    display: flex;
    height: 48px;
    letter-spacing: -0.28px;
}
.panel h2 {
    display: flex;
    align-items: center;
    justify-content: center;
    gap: 4px;
    margin: 0;
    height: 14px;
    padding-top: 1px;
    font-size: 8px;
    font-weight: normal;
    line-height: 10px;
    color: #d8dbe0;
}
.panel h2 .caret { border-width: 3px 2.5px 0; }
.launch {
    position: absolute;
    right: 3px;
    bottom: 3px;
}
.big {
    display: flex;
    flex-direction: column;
    align-items: center;
    text-align: center;
}
.big b {
    margin-top: 1px;
    font-weight: normal;
    white-space: nowrap;
    color: #e3e5e9;
}
.big .caret { margin-top: 2px; }
.big-a {
    fill: #d8dbdf;
    font: 600 26px/1 "Liberation Sans", Arial, sans-serif;
    text-anchor: middle;
    letter-spacing: 0;
}
.tool {
    display: flex;
    align-items: center;
    gap: 3.5px;
    height: 16px;
    white-space: nowrap;
    color: #e3e5e9;
}
.tool .caret { margin-left: 2px; }
.draw { width: 164px; }
.draw .big:nth-child(1) { width: 28px; }
.draw .big:nth-child(2) { width: 32px; }
.draw .big:nth-child(3) { width: 44px; }
.draw .big:nth-child(4) { width: 30px; }
.draw .col { padding-left: 3px; }
.draw .tool .caret { margin-left: 0; }
.edit { width: 191px; padding-left: 3px; }
.edit .col:nth-child(1) { width: 47px; }
.edit .col:nth-child(2) { width: 55px; }
.edit .col:nth-child(3) { width: 67px; }
.edit h2 { padding-right: 5px; }
.note { width: 123px; padding-left: 3px; }
.note .big:nth-child(1) { width: 30px; }
.note .big:nth-child(2) { width: 28px; }
.note .col { margin-left: 2px; }
.note h2 { padding-right: 3px; }
.block { width: 109px; }
.block .big { width: 32px; }
.block .col { margin-left: 2px; }
.props { width: 197px; }
.props .big { width: 62px; }
.props .col { width: 13px; }
.combos { width: 119px; }
.combo {
    display: flex;
    align-items: center;
    gap: 2px;
    height: 14px;
    margin: 0 0 2px;
    padding: 0 2px 0 1px;
    background: #4b576a;
    border: 1px solid #343d4a;
    color: #e3e5e9;
    letter-spacing: -0.2px;
}
.combo hr {
    width: 42px;
    margin: 0;
    border: 0;
    border-top: 1px solid #dfe2e6;
}
.combo hr.thick { border-top-width: 2px; }
.combo .caret {
    margin-left: auto;
    margin-right: -1px;
    border-width: 3px 2.5px 0;
}
.groups { width: 50px; }
.groups .big { width: 32px; }
.on {
    width: 16px;
    margin-left: -2px;
    padding-left: 1px;
    background: #3d5877;
    border: 1px solid #6ba6d8;
}
.groups .col { margin-left: 2px; }
.utils { width: 59px; }
.utils .big { width: 42px; }
.utils .col { margin-left: 1px; }
.clip { width: 58px; }
.clip .big { width: 40px; }
.clip .col { margin-left: 2px; }
.view { width: 42px; }
.view .big { width: 42px; }
.view h2 { padding-right: 8px; }
.layer { width: 196px; border-right: 0; }
.layer .big { width: 38px; }
.layer-right .combo {
    width: 137px;
    margin-bottom: 2px;
}
.strip {
    display: flex;
    align-items: center;
    gap: 4px;
    height: 16px;
    padding-left: 2px;
    white-space: nowrap;
    color: #e3e5e9;
    letter-spacing: -0.34px;
}
.strip span { margin-left: -2px; }

/* schede dei disegni */
.doc-tabs {
    display: flex;
    align-items: center;
    height: 20px;
    padding-top: 3px;
    border-bottom: 2px solid #46474f;
    color: #b5bbc3;
}
.doc-tabs span {
    height: 15px;
    line-height: 15px;
}
.start {
    width: 82px;
    margin-left: 14px;
    padding-left: 7px;
    background: #28313b;
}
.doc-tabs .current {
    display: flex;
    align-items: center;
    gap: 4px;
    width: 94px;
    padding-left: 8px;
    background: #3a4350;
    color: #e6e8ea;
    letter-spacing: -0.3px;
    clip-path: polygon(5px 0, 88px 0, 100% 100%, 0 100%);
}
.plus {
    display: flex;
    align-items: center;
    justify-content: center;
    width: 20px;
    margin-left: 2px;
    background: #2c353f;
}

/* area di disegno */
main {
    position: relative;
    height: 545px;
    background: #000;
    border-right: 6px solid #a9c5e3;
}
.face path { fill: #262626; stroke: #150f78; stroke-width: 1.3; }
.edge { stroke: #150f78; stroke-width: 1.3; }
.aux path { stroke: #484848; }
.side { stroke: #5e5e5e; stroke-width: 3.5; }
.green { stroke: #2aa62e; stroke-width: 1.2; }
.cyan { stroke: #43b5b5; stroke-width: 1.3; }
.yellow { stroke: #c2c23e; stroke-width: 1.1; }
.dash { stroke-dasharray: 3 2; }
.cross { stroke: #d8d8d8; stroke-width: 2; }
.grip { fill: #1d7ad9; }
.pts text { font: 20px "Liberation Sans", Arial, sans-serif; letter-spacing: 0; }
.pts tspan { font-family: "Open Sans", sans-serif; font-size: 11.5px; }
.red { fill: #e07d80; }
.blue { fill: #1c69b8; }
.violet { fill: #7468bb; }
.names { fill: #fff; font: 20.5px "Liberation Sans", Arial, sans-serif; letter-spacing: 0; }
.axis { font-size: 73px; stroke: #fff; stroke-width: 2.5; }
.pointer { stroke: #eeee34; stroke-width: 2; }
.ucs { stroke: #c9c9c9; }
.cube { fill: #343842; font: 600 8px "Open Sans", sans-serif; letter-spacing: 0; }
.compass { fill: #b9b9b9; font: bold 12.5px "Open Sans", sans-serif; text-anchor: middle; letter-spacing: 0; }
.wcs { fill: #bcbcbc; font: 7px "Liberation Sans", sans-serif; letter-spacing: 0; }
.navbar { stroke: #303030; stroke-width: .8; }
.vp-label {
    position: absolute;
    left: 2px;
    top: 5px;
    font-weight: 600;
}
.history {
    position: absolute;
    left: 960px;
    top: 506px;
    display: flex;
    flex-direction: column;
    gap: 1px;
}
.history span {
    width: 40px;
    height: 10px;
    padding-left: 1px;
    background: #2c2c2c;
    color: #8c8c8c;
    font: 8px/10px "DejaVu Sans Mono", monospace;
    letter-spacing: -0.1px;
}
.command {
    position: absolute;
    left: 279px;
    top: 527px;
    display: flex;
    width: 722px;
    height: 17px;
}
.handle {
    width: 37px;
    background: #20252f;
}
.prompt {
    display: flex;
    flex: 1;
    align-items: center;
    gap: 3px;
    padding: 0 3px;
    background: rgba(180, 180, 180, .96);
    color: #555;
    font: italic 8px "DejaVu Sans Mono", monospace;
    letter-spacing: -0.15px;
}
.prompt span { margin-left: 1px; }
.up {
    margin-left: auto;
    border: 2px solid transparent;
    border-bottom: 3px solid #333;
    border-top: 0;
}

/* barra di stato */
.statusbar {
    display: flex;
    justify-content: space-between;
    height: 19px;
    padding-right: 2px;
    background: #222a34;
}
.layouts {
    display: flex;
    align-items: center;
    gap: 14.8px;
    height: 13px;
    padding-left: 15.5px;
}
.layouts b { color: #fff; }
.switches {
    display: grid;
    grid-template-columns: 43px 18px 14px 12px 18px 15px 16px 12px 13px 13px 14px 17px 10px 18px 15px 20px 16px 16px 18px 14px 9px 20px 7px 20px 16px 19px 16px 18px 15px;
    align-items: center;
    justify-items: center;
    height: 17px;
    margin-top: 1px;
    background: #2e3643;
    color: #e6e8ea;
}
.hot { background: #4c86c0; }
.model { font-weight: 600; }

/* barra delle applicazioni */
footer {
    display: flex;
    justify-content: space-between;
    height: 27px;
    border-top: 1px solid #d5e2f2;
    background: linear-gradient(90deg, #a6bddf 1090px, #74869f 1108px);
}
.apps {
    display: grid;
    grid-template-columns: repeat(18, 41.35px);
    margin-left: -2.7px;
}
.apps div {
    display: flex;
    align-items: center;
    justify-content: center;
    margin: 0 1.3px;
}
.apps .open {
    background: linear-gradient(135deg, #e9f0f9, #b8cce6);
    border: 1px solid #6c809d;
}
.tile, .nero, .dletter {
    fill: #fff;
    font: bold 17px "Liberation Sans", Arial, sans-serif;
    text-anchor: middle;
    letter-spacing: 0;
}
.nero { font-size: 6px; fill: #222; }
.dletter { fill: #16794a; font-size: 19px; }
.tray {
    display: flex;
    align-items: center;
    gap: 4px;
    color: #f1f4f8;
}
.lang { margin-right: 6px; }
.more { margin-right: 4px; }
.clock {
    width: 44px;
    margin-left: 3px;
    text-align: center;
    line-height: 11px;
    letter-spacing: -0.2px;
}
.desk {
    width: 16px;
    height: 26px;
    background: linear-gradient(90deg, #3c4a5e, #7d8b9d);
}

.watermark {
    position: absolute;
    left: 11px;
    top: 681px;
    color: #fff;
    font-family: "Open Sans", sans-serif;
    font-weight: bold;
    text-shadow: 1px 1px 1px #222, -1px 0 1px #444;
}
.watermark small {
    display: block;
    font-size: 6.8px;
    line-height: 9px;
    letter-spacing: .5px;
}
.watermark div {
    display: flex;
    align-items: center;
    margin-top: -2px;
    gap: 2px;
    font-size: 11.2px;
    letter-spacing: .65px;
}
```
